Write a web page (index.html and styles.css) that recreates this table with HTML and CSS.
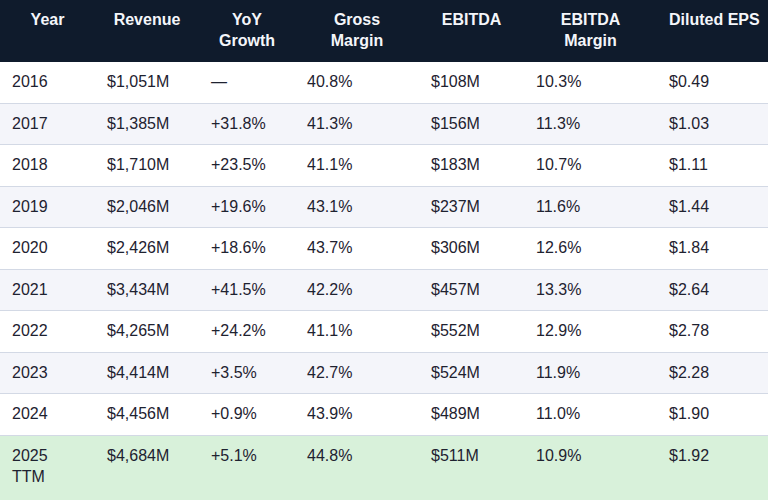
FILE: index.html
```html
<!DOCTYPE html>
<html>
<head>
<meta charset="utf-8">
<link rel="stylesheet" href="styles.css">
</head>
<body>
<table class="fin">
  <colgroup>
    <col class="c1"><col class="c2"><col class="c3"><col class="c4"><col class="c5"><col class="c6"><col class="c7">
  </colgroup>
  <thead>
    <tr><th>Year</th><th>Revenue</th><th>YoY Growth</th><th>Gross Margin</th><th>EBITDA</th><th>EBITDA Margin</th><th class="nowrap">Diluted EPS</th></tr>
  </thead>
  <tbody>
    <tr><td>2016</td><td>$1,051M</td><td>—</td><td>40.8%</td><td>$108M</td><td>10.3%</td><td>$0.49</td></tr>
    <tr><td>2017</td><td>$1,385M</td><td>+31.8%</td><td>41.3%</td><td>$156M</td><td>11.3%</td><td>$1.03</td></tr>
    <tr><td>2018</td><td>$1,710M</td><td>+23.5%</td><td>41.1%</td><td>$183M</td><td>10.7%</td><td>$1.11</td></tr>
    <tr><td>2019</td><td>$2,046M</td><td>+19.6%</td><td>43.1%</td><td>$237M</td><td>11.6%</td><td>$1.44</td></tr>
    <tr><td>2020</td><td>$2,426M</td><td>+18.6%</td><td>43.7%</td><td>$306M</td><td>12.6%</td><td>$1.84</td></tr>
    <tr><td>2021</td><td>$3,434M</td><td>+41.5%</td><td>42.2%</td><td>$457M</td><td>13.3%</td><td>$2.64</td></tr>
    <tr><td>2022</td><td>$4,265M</td><td>+24.2%</td><td>41.1%</td><td>$552M</td><td>12.9%</td><td>$2.78</td></tr>
    <tr><td>2023</td><td>$4,414M</td><td>+3.5%</td><td>42.7%</td><td>$524M</td><td>11.9%</td><td>$2.28</td></tr>
    <tr><td>2024</td><td>$4,456M</td><td>+0.9%</td><td>43.9%</td><td>$489M</td><td>11.0%</td><td>$1.90</td></tr>
    <tr class="ttm"><td>2025 TTM</td><td>$4,684M</td><td>+5.1%</td><td>44.8%</td><td>$511M</td><td>10.9%</td><td>$1.92</td></tr>
  </tbody>
</table>
</body>
</html>
```
FILE: styles.css
```css
html, body {
  margin: 0;
  padding: 0;
  background: #ffffff;
  overflow: hidden;
}
body {
  font-family: "Liberation Sans", Arial, sans-serif;
  font-size: 16px;
  line-height: 1.285;
  color: #1e2230;
}
.fin {
  width: 768px;
  border-collapse: collapse;
  table-layout: fixed;
}
.c1 { width: 95px; }
.c2 { width: 104px; }
.c3 { width: 96px; }
.c4 { width: 124px; }
.c5 { width: 105px; }
.c6 { width: 133px; }
.c7 { width: 111px; }
.fin th {
  background: #0f1b2c;
  color: #f4f6fa;
  font-weight: bold;
  text-align: center;
  vertical-align: top;
  padding: 10px 12px 11px;
}
.fin th.nowrap {
  white-space: nowrap;
}
.fin td {
  text-align: left;
  vertical-align: top;
  padding: 10px 12px;
  border-bottom: 1px solid #d3d9e5;
}
.fin tbody tr:nth-child(even) td {
  background: #f4f5fa;
}
.fin tbody tr.ttm td {
  background: #d8f1da;
  border-bottom: none;
  padding-bottom: 14px;
}
```
